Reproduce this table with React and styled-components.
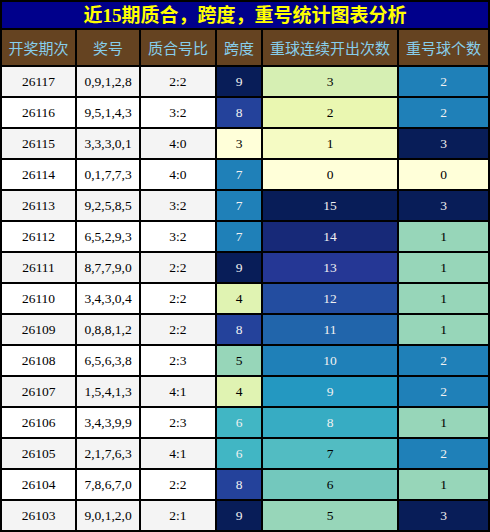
import React from "react";
import styled, { createGlobalStyle } from "styled-components";

const GlobalStyle = createGlobalStyle`
  html, body {
    margin: 0;
    padding: 0;
    background: #ffffff;
  }
`;

const rows = [
  ["26117", "0,9,1,2,8", "2:2", 9, 3, 2],
  ["26116", "9,5,1,4,3", "3:2", 8, 2, 2],
  ["26115", "3,3,3,0,1", "4:0", 3, 1, 3],
  ["26114", "0,1,7,7,3", "4:0", 7, 0, 0],
  ["26113", "9,2,5,8,5", "3:2", 7, 15, 3],
  ["26112", "6,5,2,9,3", "3:2", 7, 14, 1],
  ["26111", "8,7,7,9,0", "2:2", 9, 13, 1],
  ["26110", "3,4,3,0,4", "2:2", 4, 12, 1],
  ["26109", "0,8,8,1,2", "2:2", 8, 11, 1],
  ["26108", "6,5,6,3,8", "2:3", 5, 10, 2],
  ["26107", "1,5,4,1,3", "4:1", 4, 9, 2],
  ["26106", "3,4,3,9,9", "2:3", 6, 8, 1],
  ["26105", "2,1,7,6,3", "4:1", 6, 7, 2],
  ["26104", "7,8,6,7,0", "2:2", 8, 6, 1],
  ["26103", "9,0,1,2,0", "2:1", 9, 5, 3],
];

const headers = ["开奖期次", "奖号", "质合号比", "跨度", "重球连续开出次数", "重号球个数"];

// YlGnBu, 9 stops
const stops = [
  [255, 255, 217],
  [237, 248, 177],
  [199, 233, 180],
  [127, 205, 187],
  [65, 182, 196],
  [29, 145, 192],
  [34, 94, 168],
  [37, 52, 148],
  [8, 29, 88],
];

const ylgnbu = (t) => {
  const p = Math.max(0, Math.min(1, t)) * (stops.length - 1);
  const i = Math.min(stops.length - 2, Math.floor(p));
  const f = p - i;
  return stops[i].map((c, k) => Math.round(c + (stops[i + 1][k] - c) * f));
};

const lin = (c) => {
  const v = c / 255;
  return v <= 0.03928 ? v / 12.92 : Math.pow((v + 0.055) / 1.055, 2.4);
};

const heat = (value, min, max) => {
  const rgb = ylgnbu((value - min) / (max - min));
  const lum = 0.2126 * lin(rgb[0]) + 0.7152 * lin(rgb[1]) + 0.0722 * lin(rgb[2]);
  return {
    background: `rgb(${rgb.join(",")})`,
    color: lum < 0.408 ? "#f1f1f1" : "#000000",
  };
};

const range = (idx) => {
  const vals = rows.map((r) => r[idx]);
  return [Math.min(...vals), Math.max(...vals)];
};

const spanRange = range(3);
const streakRange = range(4);
const repeatRange = range(5);

const Board = styled.div`
  width: 490px;
  box-sizing: border-box;
  display: grid;
  grid-template-columns: 73px 62px 74px 44px 134px 89px;
  grid-template-rows: 26px 35px repeat(15, 29px);
  gap: 2px;
  padding: 2px;
  background: #000000;
  font-family: "Liberation Serif", "Noto Sans CJK SC", serif;
`;

const Title = styled.div`
  grid-column: 1 / -1;
  display: flex;
  align-items: center;
  justify-content: center;
  background: #00008b;
  color: #ffff00;
  font-weight: bold;
  font-size: 19px;
  font-family: "Liberation Serif", "Noto Sans CJK SC", sans-serif;
  line-height: 1;
`;

const HeadCell = styled.div`
  display: flex;
  align-items: center;
  justify-content: center;
  background: #654321;
  color: #87ceeb;
  font-size: 15px;
  font-family: "Noto Sans CJK SC", sans-serif;
  white-space: nowrap;
`;

const Cell = styled.div`
  display: flex;
  align-items: center;
  justify-content: center;
  font-size: 13.5px;
  color: #000000;
  background: ${({ $alt }) => ($alt ? "#f4f4f4" : "#ffffff")};
`;

const HeatCell = styled(Cell)`
  background: transparent;
`;

export default function App() {
  return (
    <>
      <GlobalStyle />
      <Board>
        <Title>近15期质合，跨度，重号统计图表分析</Title>
        {headers.map((h) => (
          <HeadCell key={h}>{h}</HeadCell>
        ))}
        {rows.map((r, i) => {
          const alt = i % 2 === 0;
          return (
            <React.Fragment key={r[0]}>
              <Cell $alt={alt}>{r[0]}</Cell>
              <Cell $alt={alt}>{r[1]}</Cell>
              <Cell $alt={alt}>{r[2]}</Cell>
              <HeatCell style={heat(r[3], ...spanRange)}>{r[3]}</HeatCell>
              <HeatCell style={heat(r[4], ...streakRange)}>{r[4]}</HeatCell>
              <HeatCell style={heat(r[5], ...repeatRange)}>{r[5]}</HeatCell>
            </React.Fragment>
          );
        })}
      </Board>
    </>
  );
}
